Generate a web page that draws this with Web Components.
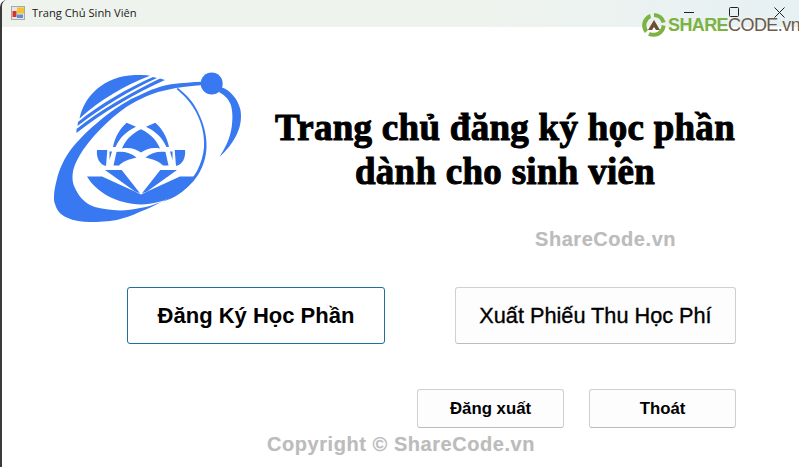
<!DOCTYPE html>
<html>
<head>
<meta charset="utf-8">
<title>Trang Chủ Sinh Viên</title>
<style>
html, body { margin: 0; height: 100%; background: #fff; overflow: hidden; }
</style>
</head>
<body>
<student-window>
    <title-bar slot="bar">Trang Chủ Sinh Viên</title-bar>
    <school-logo slot="logo"></school-logo>
    <span slot="heading">Trang chủ đăng ký học phần<br>dành cho sinh viên</span>
    <form-button slot="main" size="large" focused>Đăng Ký Học Phần</form-button>
    <form-button slot="main" size="wide">Xuất Phiếu Thu Học Phí</form-button>
    <form-button slot="foot" size="small">Đăng xuất</form-button>
    <form-button slot="foot" size="small">Thoát</form-button>
</student-window>
<script>
// window frame with the content rows
const windowTemplate = document.createElement('template');
windowTemplate.innerHTML = `
<style>
:host { display: flex; flex-direction: column; position: relative; width: 799px; height: 467px; overflow: hidden; background: #fff; box-sizing: border-box; border-left: 2px solid #3a3a3a; border-top-left-radius: 7px; font-family: "Liberation Sans", Arial, sans-serif; }
#hero { display: flex; padding: 44px 0 0 52px; height: 216px; box-sizing: border-box; }
h1 { margin: 35px 0 0 16px; width: 470px; font: 700 37px/44px "Liberation Serif", serif; -webkit-text-stroke: 1px #000; letter-spacing: 0.28px; color: #000; text-align: center; white-space: nowrap; }
#main { display: flex; gap: 70px; padding: 44px 0 0 125px; }
#foot { display: flex; gap: 25px; padding: 45px 0 0 415px; }
.mark { position: absolute; font-weight: 700; color: #bcbcbc; white-space: nowrap; letter-spacing: .55px; text-shadow: 0 0 1px #e6e6e6; }
#m1 { left: 533px; top: 228px; font-size: 20px; }
#m2 { left: 265px; top: 433px; font-size: 20px; }
#brand { position: absolute; left: 639px; top: 12px; display: flex; align-items: center; }
#brand svg { margin-right: 1px; }
#brand b { font-size: 18px; color: #7cb342; letter-spacing: -.6px; }
#brand span { font-size: 18px; color: #6d5a48; letter-spacing: -.55px; }
</style>
<slot name="bar"></slot>
<div id="hero"><slot name="logo"></slot><h1><slot name="heading"></slot></h1></div>
<div id="main"><slot name="main"></slot></div>
<div id="foot"><slot name="foot"></slot></div>
<div class="mark" id="m1">ShareCode.vn</div>
<div class="mark" id="m2">Copyright © ShareCode.vn</div>
<div id="brand">
    <svg width="26" height="26" viewBox="0 0 26 26">
        <path d="M13 1a12 12 0 0 1 11.6 9l-4 1A8 8 0 0 0 13 5z" fill="#7cb342"/>
        <path d="M24.6 14A12 12 0 0 1 7 23.4l2-3.5A8 8 0 0 0 20.7 13z" fill="#7cb342"/>
        <path d="M4 21A12 12 0 0 1 9 2l1 4A8 8 0 0 0 7 18z" fill="#7cb342"/>
        <path d="M13 8l6 10h-4l-2-3-2 3H7z" fill="#6d4c33"/>
    </svg>
    <b>SHARE</b><span>CODE.vn</span>
</div>`;

class StudentWindow extends HTMLElement {
    constructor() {
        super();
        this.attachShadow({ mode: 'open' }).appendChild(windowTemplate.content.cloneNode(true));
    }
}

const barTemplate = document.createElement('template');
barTemplate.innerHTML = `
<style>
:host { display: flex; align-items: center; height: 27px; flex: none; background: linear-gradient(90deg, #eff3ee 0%, #eff3ee 60%, #e6f1f4 100%); font: 11.2px "Open Sans", sans-serif; color: #1a1a1a; padding-left: 9px; padding-bottom: 2px; box-sizing: border-box; }
svg { flex: none; }
#label { margin-left: 7px; }
#controls { margin-left: auto; display: flex; align-items: center; gap: 34px; padding-right: 14px; }
</style>
<svg width="14" height="14" viewBox="0 0 14 14">
    <rect x=".5" y=".5" width="13" height="13" fill="#e6e6e6" stroke="#a9a9a9"/>
    <rect x="6" y="1.5" width="7" height="6" fill="#f2c230"/>
    <rect x="1.5" y="5" width="4" height="6" fill="#d8352a"/>
    <rect x="6" y="8.5" width="6" height="3.5" fill="#5b8fd6"/>
</svg>
<span id="label"><slot></slot></span>
<div id="controls">
    <svg width="11" height="11" viewBox="0 0 11 11"><path d="M0 5.5h10" stroke="#222" fill="none"/></svg>
    <svg width="11" height="11" viewBox="0 0 11 11"><rect x=".5" y=".5" width="9" height="9" rx="1" stroke="#222" fill="none"/></svg>
    <svg width="11" height="11" viewBox="0 0 11 11"><path d="M.5.5l10 10M10.5.5l-10 10" stroke="#222" fill="none"/></svg>
</div>`;

class TitleBar extends HTMLElement {
    constructor() {
        super();
        this.attachShadow({ mode: 'open' }).appendChild(barTemplate.content.cloneNode(true));
    }
}

// viewBox matches the page, so the path numbers are screen pixels
const logoTemplate = document.createElement('template');
logoTemplate.innerHTML = `
<style>
:host { display: block; flex: none; width: 200px; height: 160px; }
svg { display: block; }
</style>
<svg width="200" height="160" viewBox="54 71 200 160" fill="#3878f0">
    <!-- globe cap and its stripes -->
    <path d="M79.5 118.5C84 97 103 76 135 75C140 75 146 75 150 75.7C125 85 100 100 79.5 118.5Z"/>
    <path d="M78 122C100 104 128 88 153 77L157 78C130 90 102 107 77.5 126Z"/>
    <path d="M76.5 129C100 110 132 92 160 78.5L165 80C135 93 102 113 76.5 133Z"/>
    <!-- orbit crescent -->
    <path d="M203 81.7C192 82 182 83 173 84C160 86 150 90 140 95C128 100 117 107 106.7 115C94 125 82 136 73 146.7C64 158 59 170 56.7 180C54 190 53 200 55 204C57 211 61 215 66.7 217.5C74 221 82 222 90 222C99 222 108 221.5 116.7 220C125 218 133 215 140 211.7C148 209 155 205 162 201.7C155 204 148 207 140 208C131 210 122 211 113 210C104 209 96 208 90 205C83 201 78 195 75 188C72 182 72 176 73.3 170C75 163 79 156 83 150C90 140 98 131 106.7 123C115 115 124 108 133 103C144 97 155 92 166.7 90C179 87 192 86 203 85Z"/>
    <circle cx="211.7" cy="83.5" r="11"/>
    <!-- tail behind the ball -->
    <path d="M221 87C231 90 238 100 240.5 110C242 120 240 128 236 136C232 144 226 151 219.5 157C225 148 230 139 231.7 127C233 117 232.5 110 230.5 104C228 98 224 95 219 92Z"/>
    <!-- thin arc on the right -->
    <path d="M178 88C187 95 194 103 198 112C204 124 207 136 206.5 148C206 158 203 167 198 175C192 184 184 191 176 196C171 199 166 200.5 161.7 201.7C168 199 174 195 179 191C187 185 193 178 197 171C201 163 203.5 155 204 147C204.5 135 202 124 196.5 113C192 104 185 96 176.5 89Z"/>
    <!-- lotus upper petals -->
    <path d="M126.7 122.7L136 126.7C127 131 120 137 115.5 147L113 147C115 137 120 128 126.7 122.7Z"/>
    <path d="M155.3 122.7L146 126.7C155 131 162 137 166.5 147L169 147C167 137 162 128 155.3 122.7Z"/>
    <path d="M141 129.3C131 134 125 141 122 148.5C130 147 136 149 141 152.5C146 149 152 147 160 148.5C157 141 151 134 141 129.3Z"/>
    <path d="M116.5 152C124 151 131 153 136.5 157.5C129 159 122 162 119 165.5L113.5 165.5Z"/>
    <path d="M165.5 152C158 151 151 153 145.5 157.5C153 159 160 162 163 165.5L168.5 165.5Z"/>
    <path d="M97 150H107.3L106 166C100 165 96 158 97 150Z"/>
    <path d="M185 150H174.7L176 166C182 165 186 158 185 150Z"/>
    <path d="M109.5 151.5H112L109.5 160Z"/>
    <path d="M172.5 151.5H170L172.5 160Z"/>
    <!-- lotus lower leaves -->
    <path d="M105 170H121.7L140 193.3L135 191.5Z"/>
    <path d="M177 170H160.3L142 193.3L147 191.5Z"/>
    <path d="M87 176.5H102L137 192.5L141 194.5L145 192.5L180 176.5H195C186 192 165 204 141 204.5C117 204 96 192 87 176.5Z"/>
</svg>`;

class SchoolLogo extends HTMLElement {
    constructor() {
        super();
        this.attachShadow({ mode: 'open' }).appendChild(logoTemplate.content.cloneNode(true));
    }
}

const buttonTemplate = document.createElement('template');
buttonTemplate.innerHTML = `
<style>
:host { display: flex; align-items: center; justify-content: center; box-sizing: border-box; background: #fdfdfd; border: 1px solid #d0d0d0; border-bottom-color: #bcbcbc; border-radius: 3px; color: #000; white-space: nowrap; }
:host([size="large"]) { width: 258px; height: 57px; font-size: 22px; font-weight: 700; }
:host([size="wide"]) { width: 281px; height: 57px; font-size: 21.7px; -webkit-text-stroke: .35px #000; }
:host([size="small"]) { width: 147px; height: 39px; font-size: 16.8px; font-weight: 700; }
:host([focused]) { border-color: #1f6f9f; background: #fff; }
</style>
<slot></slot>`;

class FormButton extends HTMLElement {
    constructor() {
        super();
        this.attachShadow({ mode: 'open' }).appendChild(buttonTemplate.content.cloneNode(true));
    }
}

customElements.define('student-window', StudentWindow);
customElements.define('title-bar', TitleBar);
customElements.define('school-logo', SchoolLogo);
customElements.define('form-button', FormButton);
</script>
</body>
</html>
